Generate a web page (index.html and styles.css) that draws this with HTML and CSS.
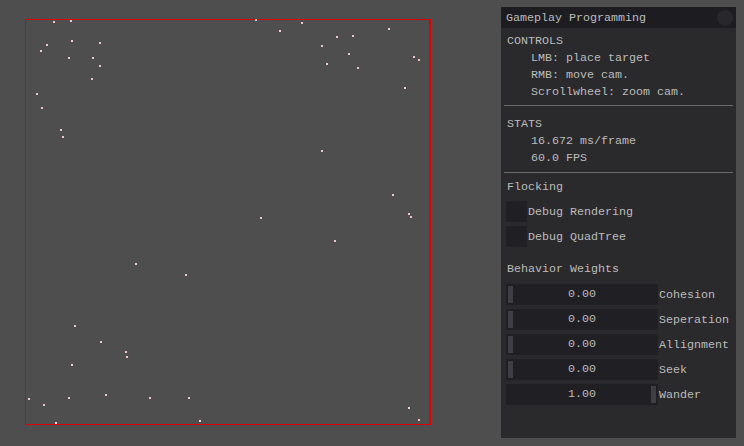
FILE: index.html
```html
<!DOCTYPE html>
<html>
<head>
<meta charset="utf-8">
<link rel="stylesheet" href="styles.css">
</head>
<body>
<div class="scene">
  <svg class="canvas" width="744" height="446" viewBox="0 0 744 446">
    <g fill="#e00000">
      <rect x="25" y="19" width="406" height="1"/>
      <rect x="25" y="19" width="1" height="406"/>
      <rect x="25" y="424" width="406" height="1"/>
      <rect x="429" y="19" width="2" height="406"/>
    </g>
    <g fill="#f2c6c6">
      <rect x="53" y="21" width="2" height="2"/><rect x="70" y="20" width="2" height="2"/>
      <rect x="255" y="19" width="2" height="2"/><rect x="301" y="22" width="2" height="2"/>
      <rect x="279" y="30" width="2" height="2"/><rect x="388" y="28" width="2" height="2"/>
      <rect x="71" y="40" width="2" height="2"/><rect x="46" y="44" width="2" height="2"/>
      <rect x="40" y="50" width="2" height="2"/><rect x="99" y="42" width="2" height="2"/>
      <rect x="336" y="36" width="2" height="2"/><rect x="352" y="35" width="2" height="2"/>
      <rect x="321" y="45" width="2" height="2"/><rect x="348" y="53" width="2" height="2"/>
      <rect x="68" y="57" width="2" height="2"/><rect x="92" y="57" width="2" height="2"/>
      <rect x="99" y="65" width="2" height="2"/><rect x="326" y="63" width="2" height="2"/>
      <rect x="357" y="67" width="2" height="2"/><rect x="413" y="56" width="2" height="2"/>
      <rect x="418" y="59" width="2" height="2"/><rect x="91" y="78" width="2" height="2"/>
      <rect x="404" y="87" width="2" height="2"/><rect x="36" y="93" width="2" height="2"/>
      <rect x="41" y="107" width="2" height="2"/><rect x="60" y="129" width="2" height="2"/>
      <rect x="62" y="136" width="2" height="2"/><rect x="321" y="150" width="2" height="2"/>
      <rect x="392" y="194" width="2" height="2"/><rect x="408" y="213" width="2" height="2"/>
      <rect x="410" y="216" width="2" height="2"/><rect x="260" y="217" width="2" height="2"/>
      <rect x="334" y="240" width="2" height="2"/><rect x="135" y="263" width="2" height="2"/>
      <rect x="185" y="274" width="2" height="2"/><rect x="74" y="325" width="2" height="2"/>
      <rect x="100" y="341" width="2" height="2"/><rect x="125" y="351" width="2" height="2"/>
      <rect x="126" y="356" width="2" height="2"/><rect x="71" y="364" width="2" height="2"/>
      <rect x="105" y="394" width="2" height="2"/><rect x="149" y="397" width="2" height="2"/>
      <rect x="188" y="397" width="2" height="2"/><rect x="28" y="398" width="2" height="2"/>
      <rect x="43" y="404" width="2" height="2"/><rect x="68" y="397" width="2" height="2"/>
      <rect x="408" y="407" width="2" height="2"/><rect x="55" y="422" width="2" height="2"/>
      <rect x="418" y="419" width="2" height="2"/><rect x="199" y="420" width="2" height="2"/>
    </g>
  </svg>

  <div class="window">
    <div class="titlebar">
      <span class="title">Gameplay Programming</span>
      <span class="collapse"></span>
    </div>
    <div class="body">
      <div class="row">CONTROLS</div>
      <div class="row indent">LMB: place target</div>
      <div class="row indent">RMB: move cam.</div>
      <div class="row indent">Scrollwheel: zoom cam.</div>
      <div class="sep sep1"></div>
      <div class="row gap-top">STATS</div>
      <div class="row indent">16.672 ms/frame</div>
      <div class="row indent">60.0 FPS</div>
      <div class="sep sep2"></div>
      <div class="row gap-top2">Flocking</div>
      <div class="check first"><span class="box"></span><span>Debug Rendering</span></div>
      <div class="check"><span class="box"></span><span>Debug QuadTree</span></div>
      <div class="row heading">Behavior Weights</div>
      <div class="sliders">
        <div class="slider-row"><div class="slider"><span class="grab"></span><span class="val">0.00</span></div><span class="lbl">Cohesion</span></div>
        <div class="slider-row"><div class="slider"><span class="grab"></span><span class="val">0.00</span></div><span class="lbl">Seperation</span></div>
        <div class="slider-row"><div class="slider"><span class="grab"></span><span class="val">0.00</span></div><span class="lbl">Allignment</span></div>
        <div class="slider-row"><div class="slider"><span class="grab"></span><span class="val">0.00</span></div><span class="lbl">Seek</span></div>
        <div class="slider-row"><div class="slider right"><span class="val">1.00</span><span class="grab"></span></div><span class="lbl">Wander</span></div>
      </div>
    </div>
  </div>
</div>
</body>
</html>
```

FILE: styles.css
```css
* { box-sizing: border-box; }
html, body { margin: 0; padding: 0; }
body {
  background: #4e4e4e;
  width: 744px;
  height: 446px;
  overflow: hidden;
  font-family: "Liberation Mono", "DejaVu Sans Mono", monospace;
  font-size: 11.67px;
  color: #bcbcbc;
}
.scene { position: relative; width: 744px; height: 446px; }
.canvas { display: block; }

.window {
  position: absolute;
  left: 501px;
  top: 7px;
  width: 235px;
  height: 431px;
  background: #2a2a2c;
  display: flex;
  flex-direction: column;
}
.titlebar {
  height: 21px;
  background: #1d1d21;
  display: flex;
  align-items: center;
  justify-content: space-between;
  padding: 0 3px 0 5px;
}
.title { line-height: 21px; padding-top: 2px; }
.collapse {
  width: 16px;
  height: 16px;
  border-radius: 50%;
  background: #27272c;
}
.body {
  padding: 5px 3px 0 3px;
  display: flex;
  flex-direction: column;
}
.row {
  height: 17px;
  line-height: 17px;
  padding-left: 3px;
  white-space: pre;
}
.indent { padding-left: 27px; }
.sep {
  height: 1px;
  background: #6a6a6a;
}
.sep1 { margin-top: 4px; }
.gap-top { margin-top: 10px; }
.sep2 { margin-top: 5px; }
.gap-top2 { margin-top: 6px; }

.check {
  display: flex;
  align-items: center;
  height: 21px;
  padding-left: 2px;
  margin-top: 4px;
}
.check.first { margin-top: 5px; }
.box {
  width: 21px;
  height: 21px;
  background: #201f24;
  margin-right: 1px;
}
.heading { margin-top: 14px; }

.sliders {
  display: flex;
  flex-direction: column;
  gap: 4px;
  margin-top: 6px;
  padding-left: 2px;
}
.slider-row {
  display: flex;
  align-items: center;
  height: 21px;
}
.slider {
  position: relative;
  width: 152px;
  height: 21px;
  background: #201f24;
  display: flex;
  align-items: center;
  padding: 0 2px;
}
.grab {
  width: 5px;
  height: 17px;
  background: #3e3e44;
  flex: none;
}
.val {
  position: absolute;
  left: 0;
  right: 0;
  text-align: center;
  line-height: 21px;
}
.slider.right { justify-content: flex-end; }
.lbl { margin-left: 1px; }
```
